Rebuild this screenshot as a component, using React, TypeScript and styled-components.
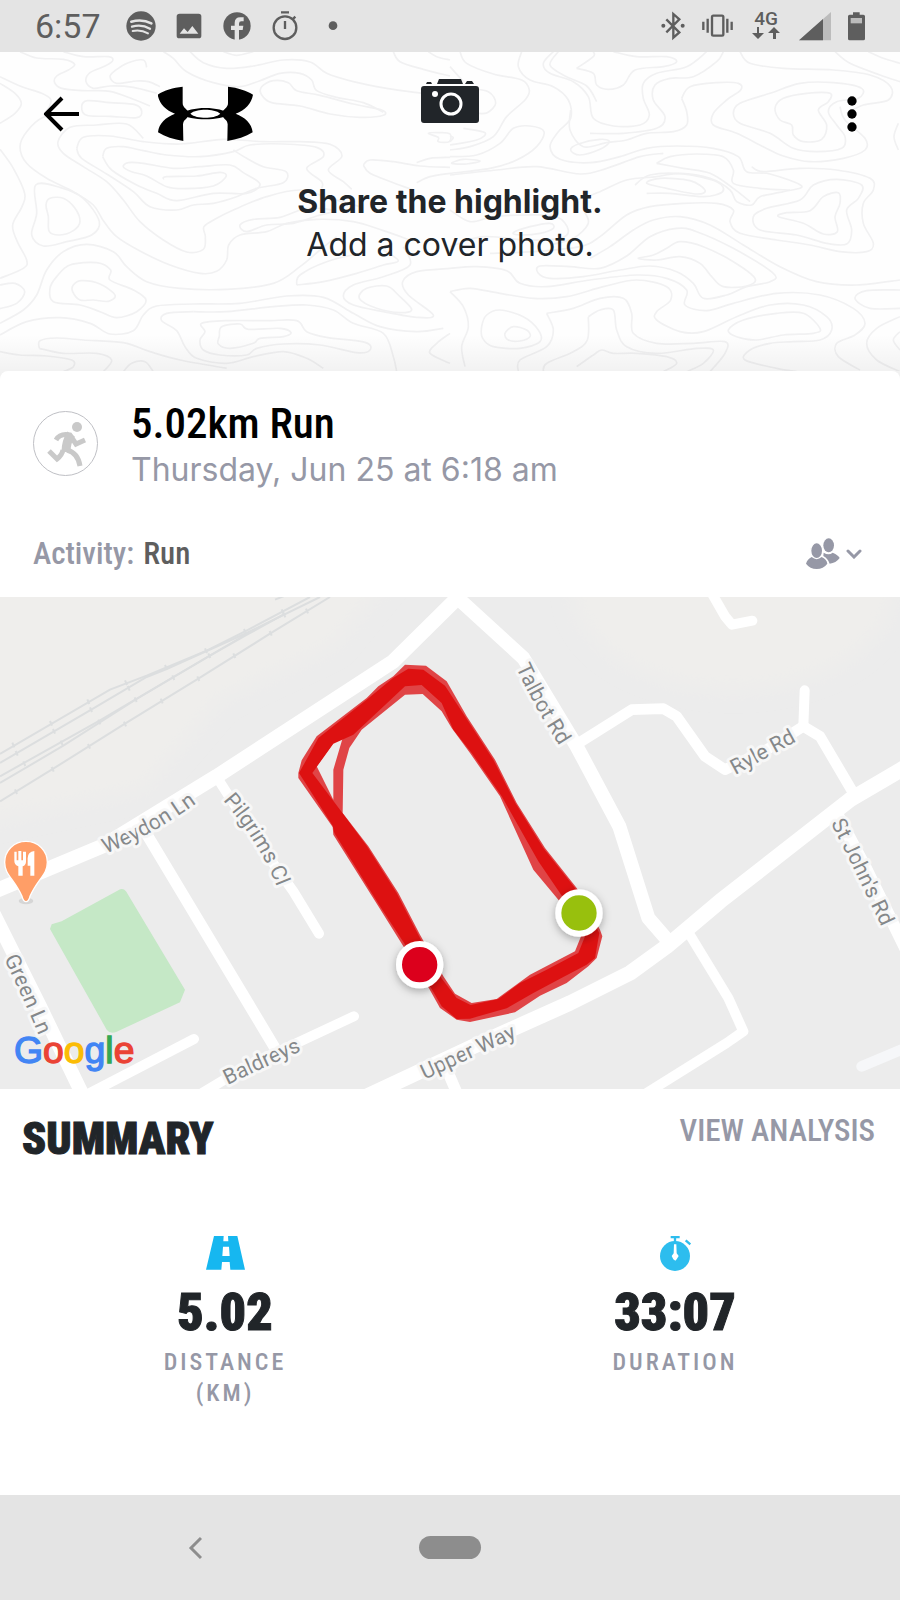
import React from "react";
import styled, { createGlobalStyle } from "styled-components";

const GlobalStyle = createGlobalStyle`
  * { box-sizing: border-box; }
  body {
    margin: 0;
    background: #fff;
    color: #212529;
    font-family: Inter, "Liberation Sans", sans-serif;
  }
  h1, h2, p, dl, dd, dt { margin: 0; }
  button { border: 0; padding: 0; background: none; color: inherit; font: inherit; cursor: pointer; }
  svg { display: block; flex: none; }
`;

const narrow = `"Roboto Condensed", "Liberation Sans Narrow", "Liberation Sans", sans-serif`;

const Page = styled.div`
  min-height: 100vh;
  display: flex;
  flex-direction: column;
`;

const StatusBar = styled.div`
  height: 52px;
  flex: none;
  padding: 0 35px;
  display: flex;
  align-items: center;
  justify-content: space-between;
  background: #e4e4e4;
  color: #5e5e5e;
`;

const StatusGroup = styled.div<{ $gap: number }>`
  display: flex;
  align-items: center;
  gap: ${(p) => p.$gap}px;
`;

const Clock = styled.time`
  width: 73px;
  font: 400 34px/52px Roboto, sans-serif;
`;

const Network = styled.div`
  width: 32px;
  height: 30px;
  display: flex;
  flex-direction: column;
  align-items: center;
  font: 500 19px/16px Roboto, sans-serif;
`;

const Cover = styled.header`
  position: relative;
  height: 327px;
  flex: none;
  overflow: hidden;
  background: #fefefe;
`;

const Contours = styled.svg`
  position: absolute;
  inset: 0;
  width: 100%;
  height: 319px;
`;

const CoverShade = styled.div`
  position: absolute;
  inset: auto 0 0;
  height: 44px;
  background: linear-gradient(rgba(0, 0, 0, 0), rgba(0, 0, 0, 0.06));
`;

const CoverContent = styled.div`
  position: relative;
`;

const Toolbar = styled.div`
  height: 124px;
  padding: 0 24px 0 38px;
  display: flex;
  align-items: center;
  justify-content: space-between;
`;

const ToolbarStart = styled.div`
  display: flex;
  align-items: center;
  gap: 72px;
`;

const IconButton = styled.button`
  width: 48px;
  height: 48px;
  display: grid;
  place-items: center;
  color: #000;
`;

const CoverButton = styled.button`
  position: absolute;
  top: 27px;
  left: 50%;
  transform: translateX(-50%);
`;

const CoverText = styled.div`
  padding-top: 4px;
  text-align: center;
  font-size: 32px;
  line-height: 43px;
`;

const CoverTitle = styled.p`
  font-weight: 700;
`;

const Card = styled.section`
  position: relative;
  height: 234px;
  flex: none;
  margin-top: -8px;
  padding: 29px 38px 8px 33px;
  display: flex;
  flex-direction: column;
  justify-content: space-between;
  border-radius: 8px 8px 0 0;
  background: #fff;
`;

const Workout = styled.div`
  display: flex;
  gap: 33px;
`;

const Avatar = styled.div`
  width: 65px;
  height: 65px;
  margin-top: 11px;
  border: 1px solid #bfc0c5;
  border-radius: 50%;
  flex: none;
`;

const WorkoutTitle = styled.h1`
  font: 500 43px/46px ${narrow};
  color: #000;
`;

const WorkoutDate = styled.p`
  font-size: 32px;
  line-height: 48px;
  color: #9698a6;
`;

const ActivityRow = styled.div`
  height: 86px;
  display: flex;
  align-items: center;
  justify-content: space-between;
  color: #9698a6;
`;

const Activity = styled.p`
  font: 500 31px/40px ${narrow};
  span { margin-left: 2px; color: #5e5e5e; }
`;

const Privacy = styled.button`
  display: flex;
  align-items: center;
  gap: 6px;
`;

const MapPanel = styled.div`
  position: relative;
  height: 492px;
  flex: none;
  margin-top: -8px;
  overflow: hidden;
  background: #ececec;
`;

const MapDrawing = styled.svg`
  width: 100%;
  height: 100%;
`;

const RoadName = styled.text`
  font: 400 64px Roboto, sans-serif;
  fill: #85888a;
  stroke: #f7f7f7;
  stroke-width: 18px;
  stroke-linejoin: round;
  paint-order: stroke;
`;

const MapBrand = styled.text`
  font: 400 112px "Liberation Sans", sans-serif;
  stroke-width: 4px;
`;

const Summary = styled.section`
  flex: 1 0 auto;
  min-height: 406px;
`;

const SummaryHead = styled.div`
  height: 147px;
  padding: 24px 25px 0 22px;
  display: flex;
  align-items: flex-start;
  justify-content: space-between;
`;

const SummaryTitle = styled.h2`
  font: 900 44px/52px ${narrow};
  -webkit-text-stroke: 1px #212529;
`;

const AnalysisLink = styled.a`
  font: 500 31px/36px ${narrow};
  color: #9698a6;
  text-decoration: none;
`;

const Metrics = styled.dl`
  display: grid;
  grid-template-columns: 1fr 1fr;
`;

const Metric = styled.div`
  display: flex;
  flex-direction: column;
  align-items: center;
  text-align: center;
`;

const MetricValue = styled.dd`
  margin-top: 14px;
  order: 1;
  font: 900 52px/56px ${narrow};
  -webkit-text-stroke: 1px #212529;
`;

const MetricLabel = styled.dt`
  max-width: 150px;
  margin-top: 6px;
  order: 2;
  font: 500 24px/31px ${narrow};
  letter-spacing: 3px;
  color: #9698a6;
`;

const NavBar = styled.nav`
  height: 105px;
  flex: none;
  padding: 0 67px;
  display: grid;
  grid-template-columns: repeat(3, 1fr);
  align-items: center;
  justify-items: center;
  background: #e4e4e4;
`;

const HomePill = styled.button`
  width: 62px;
  height: 23px;
  border-radius: 12px;
  background: #8d8d8d;
`;

type Point = [number, number];

/* Turns "x,y x,y ..." into a smooth curve through the points; a trailing z closes it. */
function smooth(source: string): string {
  const closed = source.endsWith("z");
  const pts = source
    .replace("z", "")
    .trim()
    .split(/\s+/)
    .map((p) => p.split(",").map(Number) as Point);
  const n = pts.length;
  const at = (i: number): Point =>
    closed ? pts[(i + n) % n] : pts[Math.max(0, Math.min(n - 1, i))];
  let d = `M${pts[0]}`;
  for (let i = 0; i < (closed ? n : n - 1); i++) {
    const [a, b, c, e] = [at(i - 1), at(i), at(i + 1), at(i + 2)];
    d += `C${b[0] + (c[0] - a[0]) / 6},${b[1] + (c[1] - a[1]) / 6} ${c[0] - (e[0] - b[0]) / 6},${c[1] - (e[1] - b[1]) / 6} ${c[0]},${c[1]}`;
  }
  return closed ? d + "Z" : d;
}

const westContours = [
  "0,80 60,108 125,130 152,148 148,170 130,195",
  "0,100 45,130 64,160 45,190 0,220",
  "60,5 110,24 190,28 224,43 205,60 170,78 164,98 185,115 250,122 330,124 400,148 450,168",
  "190,5 250,20 325,20 338,32 315,48 270,68 258,95 280,115 330,108 400,112 470,130",
  "440,52 430,30 385,38 345,62 330,80 350,100 410,93 445,95 480,110",
  "490,5 520,25 560,65 640,98 720,110 780,92 840,70 900,70 935,90 950,122 1010,142 1090,158 1150,187",
  "570,5 610,38 680,55 760,48 850,30 930,36 980,70 1060,95 1160,115 1265,130",
  "670,5 710,16 760,5",
  "1180,5 1200,35 1270,58 1350,78",
  "1285,5 1310,20 1350,30",
  "785,110 820,92 865,98 890,122 960,136 1060,162 1145,180 1150,196 1080,202 990,192 900,168 815,158 785,135z",
  "262,152 330,158 405,164 425,184 410,203 330,199 260,196 245,170z",
  "0,298 40,355 74,430 66,470 38,525 52,575 80,630 70,655 0,685",
  "210,190 130,202 80,245 60,290 80,340 140,385 220,425 280,465 310,512 350,560 420,603 510,645 600,670 650,664 680,630 686,585 720,555 800,545 860,520 950,508 1060,515 1150,542 1230,570",
  "430,265 380,222 290,225 210,232 174,275 190,310 250,350 320,395 370,450 420,515 490,570 560,606 610,598 616,560 612,530 650,505 700,480 800,440 900,420 990,445 1080,470",
  "230,295 250,262 330,258 430,275 540,282 670,268 790,275 900,275 990,283 1026,318 985,360 1030,395 1055,418",
  "230,295 245,325 320,372 400,425 450,470 530,480 580,465 640,460 710,440 770,415 850,398 858,365 790,350 740,325 700,300",
  "308,320 320,295 370,290 430,302 500,315 600,320 700,305 750,285 850,282 950,292 970,320 920,355 965,395 965,415",
  "308,320 335,360 410,405 470,430 530,452 640,430 740,430 780,402 730,368 690,345 600,350 520,355 430,340 385,338 370,350 395,365 440,378 500,410 555,416 640,408 678,380 660,367 590,378 500,380 490,388",
  "107,405 180,412 250,445 298,515 275,555 200,575 130,588 95,555 110,490z",
  "150,445 190,445 225,475 240,515 220,542 180,555 148,545 145,500 138,465z",
  "0,705 45,700 74,725 50,760 0,776",
  "0,820 70,780 110,735 140,660 190,605 260,583 340,605 380,650 440,695 540,715 680,718 820,700 900,650 960,600 1010,560",
  "170,680 210,645 290,638 332,660 330,690 400,720 438,750 410,785 350,803 300,785 240,765 160,755 150,715z",
  "220,705 245,692 300,702 345,735 325,754 280,750 240,750 218,725z",
  "0,855 80,815 180,803 270,820 330,852 400,842 430,795 470,768 580,762 720,760 860,738 970,742 1060,790 1140,830 1250,845 1330,835",
  "580,785 500,790 485,812 530,842 555,890 590,925 680,940 760,920 850,905 920,925 970,955",
  "580,785 680,785 820,770 920,765 1000,780 1060,820 1150,850 1180,920 1190,965",
  "118,895 120,872 170,864 250,870 370,878 450,905 540,930 680,955",
  "118,895 190,910 290,910 335,930 310,965",
  "0,905 60,915 140,918 215,930 220,950 190,965",
  "370,965 395,940 435,935 460,965",
  "605,820 680,812 800,812 890,812 920,845 980,862 1095,877 1110,900 1070,908 960,885 850,882 770,895 740,915 660,915 610,900 600,870 615,845z",
  "665,830 720,822 745,838 840,835 873,848 850,860 780,865 760,880 690,895 655,882 658,858z",
  "1090,345 1110,330 1180,335 1260,348 1350,352",
  "1090,345 1110,370 1180,398 1240,420",
  "1250,338 1290,325 1350,322", "1250,398 1290,380 1350,370",
  "720,525 760,508 840,502 920,475 1000,482 950,498 880,520 800,525 740,545z",
  "890,705 900,675 980,635 1080,610", "890,705 970,695 1070,670 1150,645 1195,632 1150,600",
  "1350,655 1250,665 1208,695 1225,735 1300,795 1250,802 1150,785 1060,765 1030,738 1060,705 1150,680 1230,645 1210,590",
  "1078,745 1100,715 1160,708 1195,735 1235,778 1200,788 1130,775z",
  "1350,850 1310,880 1290,910 1350,940",
  "1285,250 1320,248 1350,252 1348,275 1315,275 1315,262z",
];

const eastContours = [
  "30,5 50,40 130,72 215,90 238,120 225,150 170,200 130,260 60,290 0,300",
  "0,50 40,95", "50,115 115,125 137,160 112,188 80,190",
  "215,5 205,50 240,90 310,110 355,150 362,205 325,245 300,290 330,328 420,338 510,320 590,295 680,288 790,295 865,320 890,365 960,372 1055,408 1000,425 930,440 905,465 860,455 840,420 780,385 690,370 620,380 530,390 450,425 380,450",
  "310,5 280,40 300,70 370,95 415,140 430,205 490,228 570,225 598,195 580,145 580,100 620,70 710,50 770,5",
  "380,55 430,20 430,5", "380,55 430,70 440,105 475,118 520,105 555,60 640,50 680,35 650,20 560,20 490,5",
  "325,5 300,45 345,78 410,108 440,155",
  "420,250 520,250 620,235 645,200 610,150 615,105 660,85 730,80 800,35 820,5",
  "695,145 720,110 800,98 865,100 872,120 830,150 790,190 790,225 860,250 940,290 1000,318 1080,335 1180,325 1245,300 1245,265 1185,210 1170,170",
  "695,145 710,185 710,225 670,245 590,250 530,270 470,278 400,290 360,240 362,180",
  "870,5 900,40 1000,55 1150,60 1260,75 1322,110 1315,150 1240,165 1190,190",
  "1155,5 1200,40 1290,75 1350,95", "1255,5 1300,25 1350,40",
  "850,190 870,160 960,130 1050,100 1150,98 1235,115 1225,145 1160,155 1135,185 1160,225 1185,260 1175,295 1100,305 1030,295 960,250 870,220z",
  "975,175 1000,145 1070,130 1140,130 1135,155 1105,180 1130,225 1115,268 1060,275 1030,255 1025,225 990,210z",
  "362,300 385,282 450,268 478,275 450,298 390,315z",
  "0,320 80,315 150,280 190,235 240,228 282,245 260,290 200,330 120,355 0,370",
  "0,258 10,263 0,275", "40,235 105,248 80,270 0,285",
  "5,340 40,328 90,333 50,342z",
  "0,375 140,360 260,350 390,372 470,355 570,320 640,310",
  "620,340 660,320 740,312 820,320 850,360 850,400 930,415 1020,420",
  "620,340 700,355 780,370 850,415 900,455", "905,350 940,365 1050,355 1160,360 1260,385 1270,420 1240,460 1240,520 1270,580 1250,605 1170,605 1080,585 980,570 870,550 840,515 850,480 800,460 700,460 600,470 530,495 450,560 390,590 250,605 120,610",
  "590,400 630,385 720,392 765,420 740,432 650,415z",
  "555,405 600,375 700,372 800,395 818,425 760,440 660,430 590,430",
  "910,500 950,475 1050,450 1090,405 1160,388 1235,405 1225,445 1190,480 1205,540 1190,582 1130,580 1040,555 930,540z",
  "985,500 1010,488 1080,482 1120,440 1165,428 1170,460 1155,500 1162,545 1120,552 1060,520z",
  "0,480 60,515 130,500 230,495 320,500 355,540 330,565 230,570 100,560 0,590",
  "190,548 240,530 300,520 310,535 270,550 210,555z",
  "400,480 415,520 370,565 300,585",
  "0,655 80,650 170,662 210,700 290,710 420,690 560,675 650,685 710,720 705,765 770,782 850,760 980,730 1110,735 1210,775 1245,820 1215,855 1160,880 1165,920 1230,960",
  "265,670 270,648 360,650 450,655 530,618 600,560 680,535 740,545 850,595 970,670 960,695 890,710 830,735 760,745 730,700 680,665 600,648 510,660 400,680 300,685z",
  "565,625 610,615 650,595 690,575 760,590 850,635 915,685 890,708 820,710 785,680 750,640 690,620 620,630z",
  "420,625 480,590 550,540 610,510 690,500 780,525 880,585 990,650 1100,695 1220,705 1350,690",
  "0,725 60,715 150,730 250,745 350,740 460,710 560,690 650,710 662,750 620,785 620,810 690,845 760,845 860,800 960,765 1060,765 1130,800 1145,840 1110,870 1030,875 960,880 900,900 885,930 980,955 1040,965",
  "0,725 40,770 55,830 35,890 45,950", "95,830 110,795 150,780 220,800 265,840 270,875 210,895 130,890 98,865z",
  "165,850 190,830 230,840 240,860 210,873 175,870z",
  "290,790 370,775 450,745 520,745 545,790 550,850 620,880 730,880 825,875 825,910 780,965",
  "290,790 310,840 290,890 210,930 205,965",
  "415,800 450,780 490,780 500,840 530,890 620,910 740,895 790,900 760,940 710,965",
  "415,800 412,870 370,905 290,940 280,965", "380,950 430,915 455,900 490,910 560,910 650,920 680,940 640,965",
  "835,840 880,810 980,790 1060,790 1110,835 1090,850 1000,855 920,870 860,860z",
  "1350,720 1250,722 1215,745 1260,775 1350,775",
  "1350,800 1280,835 1250,880 1280,930 1350,965", "1350,845 1330,870 1350,900", "1345,220 1332,260 1345,300",
];

function ContourPattern() {
  return (
    <Contours viewBox="0 6 2700 957" preserveAspectRatio="xMidYMid slice" aria-hidden="true">
      <g fill="none" stroke="#f1f1f2" strokeWidth="5">
        {westContours.map((c) => <path key={c} d={smooth(c)} />)}
        <g transform="translate(1350)">
          {eastContours.map((c) => <path key={c} d={smooth(c)} />)}
        </g>
      </g>
    </Contours>
  );
}

function BrandMark() {
  const half =
    "M549,109C520,112 492,121 474,133C479,160 497,179 526,190C498,201 478,218 475,246C496,259 522,268 551,272L550,222C551,214 554,209 559,206L572,190L558,175C552,170 549,165 549,158Z";
  return (
    <svg width="96" height="56" viewBox="475 107 288 168" role="img" aria-label="Under Armour">
      <path d={half} />
      <path d={half} transform="translate(1234) scale(-1 1)" />
      <path fillRule="evenodd" d="M540,190C560,180 586,173 617,173S674,180 694,190C674,201 648,207 617,207S560,201 540,190ZM572,190C582,199 600,202 617,202S652,199 662,190C652,181 634,178 617,178S582,181 572,190Z" />
    </svg>
  );
}

function CameraIcon() {
  return (
    <svg width="58" height="45" viewBox="0 0 58 45" aria-hidden="true">
      <path fill="#212529" d="M5 5L6 3H10L11 5ZM16 5L18 0H40L42 5ZM44 5L46 2H51L53 5ZM3 7H55Q58 7 58 10V41Q58 44 55 44H3Q0 44 0 41V10Q0 7 3 7Z" />
      <circle cx="30" cy="25" r="10" fill="none" stroke="#fff" strokeWidth="3" />
      <circle cx="14" cy="15" r="3" fill="#fff" />
    </svg>
  );
}

const rails = [
  "M0,493L330,300L440,258L620,183L735,125L930,22",
  "M0,520L270,362L440,262L500,238L740,130L960,22",
  "M0,560L300,392L520,262L745,130",
  "M0,580L190,468L410,328L630,198L745,133L850,75",
  "M0,635L155,540L375,402L595,267L810,132L990,22",
];

const ties = [
  [40, 466], [153, 401], [265, 336], [378, 279], [498, 233], [618, 183], [735, 125], [848, 66],
  [50, 491], [162, 425], [273, 360], [386, 296], [73, 522], [185, 460], [298, 397], [407, 330],
  [520, 264], [628, 198], [853, 76], [48, 606], [158, 539], [267, 470], [375, 403], [485, 334],
  [595, 267], [703, 198], [812, 131], [921, 64],
];

const roads: [string, number][] = [
  ["M-40,915L310,768L650,560L1180,215L1375,22", 44],
  ["M1370,22L1570,205L1730,470L1858,710L1945,985L2010,1060", 42],
  ["M655,570L790,780L880,905L957,1032", 30],
  ["M435,725L822,1370", 34],
  ["M-20,970L120,1250L250,1520", 42],
  ["M270,1510L582,1348", 30],
  ["M590,1520L740,1430L1062,1280", 30],
  ["M1100,1520L1420,1370L1710,1240L1890,1150L2000,1070L2160,935L2550,630L2720,530", 46],
  ["M1728,465L1895,360L1990,357L2030,380L2115,500L2175,540L2300,480L2410,410L2460,440L2560,610", 32],
  ["M2410,410L2414,302", 30],
  ["M2510,670L2600,840L2720,1085", 36],
  ["M2060,1020L2185,1225L2230,1325L2180,1360L1940,1510", 30],
  ["M2135,10L2175,80L2196,105L2257,93", 30],
  ["M1345,1450L1375,1520", 34],
];

const roadNames: [string, string, string][] = [
  ["weydon", "Weydon Ln", "M317,792Q470,732 620,618"],
  ["pilgrims", "Pilgrims Cl", "M669,632Q792,775 845,930"],
  ["green", "Green Ln", "M12,1107Q65,1215 130,1370"],
  ["baldreys", "Baldreys", "M683,1486Q785,1436 925,1374"],
  ["upper", "Upper Way", "M1274,1470L1594,1322"],
  ["talbot", "Talbot Rd", "M1548,233Q1604,356 1690,486"],
  ["ryle", "Ryle Rd", "M2206,556L2446,424"],
  ["stjohns", "St John's Rd", "M2492,700Q2572,855 2672,1070"],
];

const routeHalo =
  "M895,550L905,512L950,440L1100,325L1135,290L1180,260L1215,225L1278,228L1340,275L1400,380L1485,510L1550,640L1635,775L1730,895L1800,1020L1807,1040L1790,1105L1765,1130L1700,1180L1620,1218L1545,1268L1410,1297L1370,1290L1320,1255L1250,1130L1210,1070L1135,950L1000,735L998,712L895,565Z" +
  "M950,530L1000,630L1000,540L1028,445L1000,460ZM1085,420L1215,315L1268,313L1325,365L1355,415L1410,490L1500,620L1600,840L1675,930L1745,1035L1725,1085L1590,1155L1490,1228L1415,1240L1365,1212L1330,1160L1260,1035L1195,910L1105,770L1028,670L1030,540L1048,475Z";

const routeBody =
  "M897,550L925,500L955,445L1100,330L1180,264L1225,237L1270,240L1335,288L1395,380L1480,510L1546,640L1630,775L1725,895L1798,1030L1785,1105L1760,1125L1690,1162L1600,1210L1520,1256L1410,1287L1370,1288L1325,1250L1255,1130L1212,1060L1140,950L1003,730L998,708Z" +
  "M937,550L1000,462L1060,435L1215,290L1265,286L1325,340L1360,420L1415,490L1505,620L1615,815L1690,925L1757,1035L1735,1090L1640,1140L1560,1180L1495,1228L1412,1246L1370,1225L1320,1160L1255,1035L1190,910L1100,768L1020,660Z";

function RouteMap() {
  const brand: [string, string][] = [
    ["G", "#4285f4"], ["o", "#ea4335"], ["o", "#fbbc05"], ["g", "#4285f4"], ["l", "#34a853"], ["e", "#ea4335"],
  ];
  return (
    <MapDrawing viewBox="0 22 2700 1476" preserveAspectRatio="xMidYMid slice" role="img" aria-label="Route map">
      <defs>
        <filter id="pinShadow" x="-50%" y="-50%" width="200%" height="200%">
          <feDropShadow dx="0" dy="8" stdDeviation="12" floodOpacity="0.3" />
        </filter>
        <filter id="soft" x="-30%" y="-30%" width="160%" height="160%">
          <feGaussianBlur stdDeviation="30" />
        </filter>
        {roadNames.map(([id, , d]) => <path key={id} id={id} d={d} />)}
      </defs>
      <g fill="#efeeec" filter="url(#soft)">
        <path d="M-150,-100H1220L1000,170L660,330L430,600L-150,720Z" />
        <ellipse cx="2200" cy="0" rx="480" ry="300" />
      </g>
      <g fill="none" stroke="#dcdedf" strokeWidth="6">
        {rails.map((d) => <path key={d} d={d} />)}
        {ties.map(([x, y]) => <path key={`${x}-${y}`} d={`M${x - 3},${y - 7}l6,14`} />)}
        <path d="M825,30l30,-12" />
      </g>
      <path fill="#c5e8c6" d="M150,1018L155,1004L185,995L355,902Q368,892 378,905L555,1200L540,1238L350,1326Q330,1334 320,1320Z" />
      <g fill="none" stroke="#fff" strokeLinecap="round" strokeLinejoin="round">
        {roads.map(([d, width]) => <path key={d} d={d} strokeWidth={width} />)}
        <path d="M2585,1430L2740,1365" stroke="#f6f7f9" strokeWidth="32" />
      </g>
      {roadNames.map(([id, name]) => (
        <RoadName key={id}><textPath href={`#${id}`}>{name}</textPath></RoadName>
      ))}
      <g fillRule="evenodd">
        <path d={routeHalo} fill="#e04446" />
        <path d={routeBody} fill="#dd1111" />
      </g>
      <g stroke="#fff" strokeWidth="18" filter="url(#pinShadow)">
        <circle cx="1259" cy="1125" r="62" fill="#dc001e" />
        <circle cx="1737" cy="970" r="62" fill="#98c011" />
      </g>
      <ellipse cx="78" cy="934" rx="22" ry="10" fill="#d6d6d6" />
      <path fill="#ff9e67" stroke="#fff" strokeWidth="4" d="M78,755C42,755 14,783 14,818C14,856 42,866 66,920Q70,936 78,936T90,920C114,866 142,856 142,818C142,783 114,755 78,755Z" />
      <path fill="#fff" d="M43,786h7v26h5v-28h9v28h5v-26h9v30q0,10 -10,14v28h-13v-28q-12,-4 -12,-16ZM103,784v74h-12v-30h-8v-22q0,-20 20,-22Z" />
      <MapBrand x="42" y="1420">
        {brand.map(([letter, color], i) => <tspan key={i} fill={color} stroke={color}>{letter}</tspan>)}
      </MapBrand>
    </MapDrawing>
  );
}

export default function App() {
  return (
    <Page>
      <GlobalStyle />
      <StatusBar>
        <StatusGroup $gap={18}>
          <Clock>6:57</Clock>
          <svg width="30" height="30" viewBox="378 34 90 90" aria-hidden="true">
            <circle cx="423" cy="79" r="44" fill="#5e5e5e" />
            <g fill="none" stroke="#e4e4e4" strokeLinecap="round">
              <path strokeWidth="8" d="M394,66Q427,57 454,71" />
              <path strokeWidth="7" d="M396,81Q425,73 450,87" />
              <path strokeWidth="6" d="M398,94Q423,89 444,101" />
            </g>
          </svg>
          <svg width="30" height="30" viewBox="523 34 90 90" fill="#5e5e5e" aria-hidden="true">
            <path fillRule="evenodd" d="M540,42H597Q605,42 605,50V108Q605,116 597,116H539Q531,116 531,108V50Q531,42 540,42ZM540,102H596L578,79L564,97L553,86Z" />
          </svg>
          <svg width="30" height="30" viewBox="668 34 90 90" aria-hidden="true">
            <circle cx="713" cy="79" r="41" fill="#5e5e5e" />
            <path fill="#e4e4e4" d="M706,121V91H695V78H706V70Q706,53 723,53H733V65H726Q719,65 719,72V78H732L730,91H719V121Z" />
          </svg>
          <svg width="30" height="30" viewBox="813 34 90 90" fill="none" stroke="#5e5e5e" strokeWidth="7" aria-hidden="true">
            <circle cx="858" cy="84" r="34" />
            <path d="M846,38H870M858,64V88M880,60L889,51" />
          </svg>
          <svg width="30" height="30" viewBox="957 34 90 90" aria-hidden="true">
            <circle cx="1002" cy="78" r="13" fill="#5e5e5e" />
          </svg>
        </StatusGroup>
        <StatusGroup $gap={17}>
          <svg width="24" height="30" viewBox="633 34 72 90" fill="none" stroke="#5e5e5e" strokeWidth="7" aria-hidden="true">
            <path d="M649,59L688,98L670,114V43L688,59L649,98" />
            <circle cx="640" cy="78" r="6" fill="#5e5e5e" stroke="none" />
            <circle cx="698" cy="78" r="6" fill="#5e5e5e" stroke="none" />
          </svg>
          <svg width="31" height="30" viewBox="756 34 93 90" fill="none" stroke="#5e5e5e" strokeWidth="7" aria-hidden="true">
            <rect x="786" y="48" width="34" height="60" rx="4" />
            <path d="M773,57V99M760,66V91M832,57V99M845,66V91" />
          </svg>
          <Network>
            4G
            <svg width="28" height="12" viewBox="0 0 28 12" aria-hidden="true">
              <g fill="#5e5e5e"><path d="M5 0H7V6H12L6 12L0 6H5Z" /><path d="M21 12H24V6H28L22 0L16 6H21Z" /></g>
            </svg>
          </Network>
          <svg width="32" height="30" viewBox="1047 32 96 90" aria-hidden="true">
            <path fill="#bcbcbc" d="M1143,35V120H1047Z" />
            <path fill="#5e5e5e" d="M1119,56V120H1047Z" />
          </svg>
          <svg width="17" height="30" viewBox="1195 32 51 90" aria-hidden="true">
            <path fill="#5e5e5e" d="M1210,36H1230V43H1241Q1246,43 1246,48V115Q1246,120 1241,120H1200Q1195,120 1195,115V48Q1195,43 1200,43H1210Z" />
            <rect x="1203" y="53" width="34" height="16" fill="#bcbcbc" />
          </svg>
        </StatusGroup>
      </StatusBar>

      <Cover>
        <ContourPattern />
        <CoverShade />
        <CoverContent>
          <Toolbar>
            <ToolbarStart>
              <IconButton aria-label="Back">
                <svg width="36" height="36" viewBox="0 0 36 36" fill="none" stroke="currentColor" strokeWidth="4" aria-hidden="true">
                  <path d="M18 2L2 18L18 34M2 18H35" />
                </svg>
              </IconButton>
              <BrandMark />
            </ToolbarStart>
            <CoverButton aria-label="Add a cover photo"><CameraIcon /></CoverButton>
            <IconButton aria-label="More options">
              <svg width="10" height="36" viewBox="0 0 30 108" aria-hidden="true">
                <circle cx="15" cy="15" r="14" /><circle cx="15" cy="54" r="14" /><circle cx="15" cy="93" r="14" />
              </svg>
            </IconButton>
          </Toolbar>
          <CoverText>
            <CoverTitle>Share the highlight.</CoverTitle>
            <p>Add a cover photo.</p>
          </CoverText>
        </CoverContent>
      </Cover>

      <Card>
        <Workout>
          <Avatar>
            <svg width="63" height="63" viewBox="0 0 63 63" fill="none" stroke="#c9c9c9" strokeWidth="5" aria-hidden="true">
              <circle cx="43" cy="15" r="5" fill="#c9c9c9" stroke="none" />
              <path d="M22 28Q26 21 36 23L42 32L51 28M33 38Q44 41 46 54M29 38Q28 43 23 47L15 39" />
              <path strokeWidth="9" d="M37 22Q32 30 32 40" />
            </svg>
          </Avatar>
          <div>
            <WorkoutTitle>5.02km Run</WorkoutTitle>
            <WorkoutDate>Thursday, Jun 25 at 6:18 am</WorkoutDate>
          </div>
        </Workout>
        <ActivityRow>
          <Activity>Activity: <span>Run</span></Activity>
          <Privacy aria-label="Who can see this workout">
            <svg width="34" height="32" viewBox="80 52 102 96" fill="#9698a6" aria-hidden="true">
              <ellipse cx="148" cy="74" rx="16" ry="21" />
              <path d="M133,96Q148,106 160,96Q178,104 181,112Q170,127 151,129Q147,115 132,106Z" />
              <ellipse cx="112" cy="90" rx="18" ry="24" stroke="#fff" strokeWidth="4" />
              <path d="M97,109Q112,122 127,109Q142,116 144,129Q132,145 112,145Q92,145 80,129Q84,116 97,109Z" />
            </svg>
            <svg width="16" height="10" viewBox="0 0 16 10" fill="none" stroke="#9698a6" strokeWidth="3" strokeLinecap="round" aria-hidden="true">
              <path d="M2 2L8 8L14 2" />
            </svg>
          </Privacy>
        </ActivityRow>
      </Card>

      <MapPanel><RouteMap /></MapPanel>

      <Summary>
        <SummaryHead>
          <SummaryTitle>SUMMARY</SummaryTitle>
          <AnalysisLink href="#analysis">VIEW ANALYSIS</AnalysisLink>
        </SummaryHead>
        <Metrics>
          <Metric>
            <svg width="39" height="35" viewBox="615 438 117 105" aria-hidden="true">
              <path fill="#16b7f0" fillRule="evenodd" d="M639,438H668L667,454H682L681,438H709L732,539H688L686,516H663L661,539H615ZM666,470L664,498H686L684,470Z" />
            </svg>
            <MetricLabel>DISTANCE (KM)</MetricLabel>
            <MetricValue>5.02</MetricValue>
          </Metric>
          <Metric>
            <svg width="33" height="35" viewBox="622 438 99 105" aria-hidden="true">
              <circle cx="670" cy="498" r="45" fill="#2dbdee" />
              <path fill="none" stroke="#2dbdee" strokeWidth="7" d="M657,441H684M670,440V458M702,451L716,463" />
              <path fill="#fff" d="M667,463H674L675,490L681,498L675,508L671,512L665,508L660,498L666,490Z" />
            </svg>
            <MetricLabel>DURATION</MetricLabel>
            <MetricValue>33:07</MetricValue>
          </Metric>
        </Metrics>
      </Summary>

      <NavBar aria-label="System">
        <IconButton aria-label="System back">
          <svg width="14" height="24" viewBox="0 0 14 24" fill="none" stroke="#8d8d8d" strokeWidth="3" aria-hidden="true">
            <path d="M13 2L3 12L13 22" />
          </svg>
        </IconButton>
        <HomePill aria-label="Home" />
      </NavBar>
    </Page>
  );
}
